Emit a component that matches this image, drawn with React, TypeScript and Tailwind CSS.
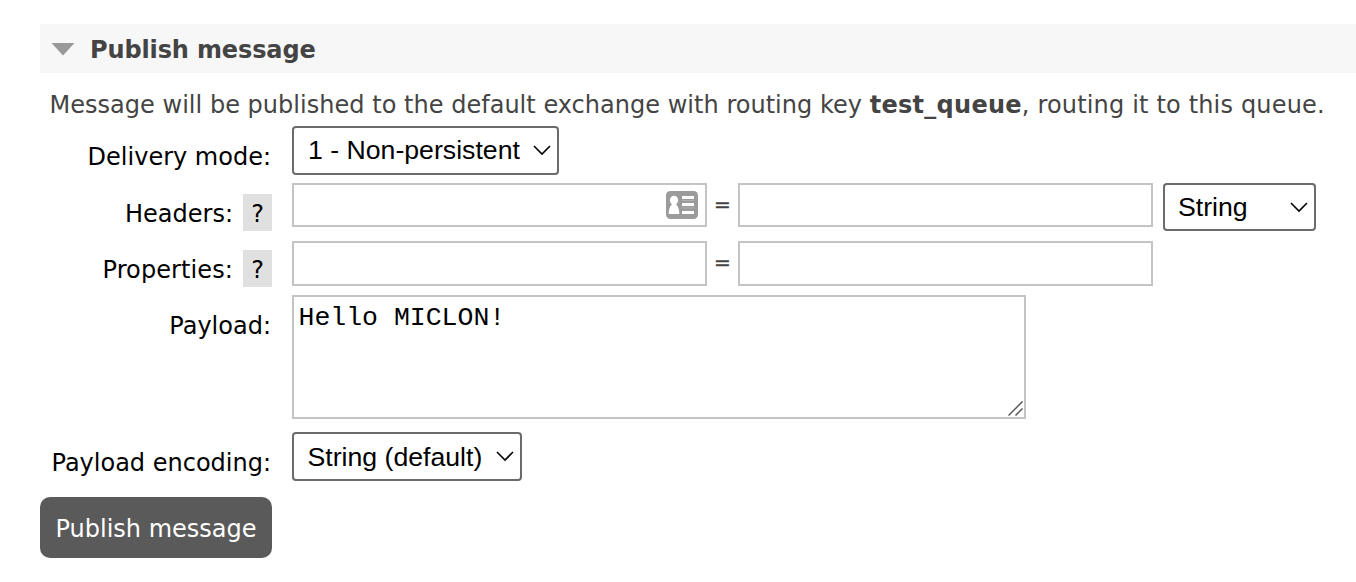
import React from "react";

const labelText =
  "font-['DejaVu_Sans',sans-serif] text-[24px] leading-[28px] text-black whitespace-nowrap";

function Select({ options, className, textClass }: { options: string[]; className: string; textClass: string }) {
  return (
    <div className={`relative shrink-0 ${className}`}>
      <select
        className={`block h-full w-full appearance-none rounded-[4px] border-2 border-[#6b6b6b] bg-white font-['Liberation_Sans',Arial,sans-serif] text-[26.67px] leading-[30px] text-black outline-none ${textClass}`}
      >
        {options.map((o) => (
          <option key={o}>{o}</option>
        ))}
      </select>
      <svg className="pointer-events-none absolute right-[8px] top-[18px] h-[12px] w-[18px]" viewBox="0 0 18 12" fill="none">
        <path d="M1 2 9 10 17 2" stroke="#000" strokeWidth="1.600" />
      </svg>
    </div>
  );
}

function TextInput({ className, label, children }: { className: string; label: string; children?: React.ReactNode }) {
  return (
    <div className={`relative w-[415px] shrink-0 ${className}`}>
      <input aria-label={label} className="block h-full w-full border-2 border-[#c4c4c4] bg-white px-2 text-[24px] outline-none" />
      {children}
    </div>
  );
}

function Label({ children, help, className }: { children: React.ReactNode; help?: boolean; className: string }) {
  return (
    <div className={`flex w-[232px] shrink-0 items-center justify-end ${labelText} ${className}`}>
      <span className={help ? "pt-[2px]" : "pr-[1px]"}>{children}</span>
      {help && (
        <span className="ml-[10px] flex h-[37px] w-[29px] items-center justify-center bg-[#e0e0e0] pt-[2px]">?</span>
      )}
    </div>
  );
}

function Equals() {
  return (
    <span className="w-[31px] shrink-0 text-center font-['DejaVu_Sans',sans-serif] text-[20px] leading-[42px] text-[#444] [-webkit-text-stroke:0.5px_#444]">=</span>
  );
}

function ContactIcon() {
  return (
    <svg className="absolute left-[374px] top-[8px] h-[28px] w-[32px]" viewBox="0 0 32 28">
      <rect width="32" height="28" rx="4.5" fill="#9b9b9b" />
      <ellipse cx="8" cy="9.300" rx="4.100" ry="4.600" fill="#fff" />
      <path d="M2.700 23c0-5 1.300-8 3.500-10h3.600c2.200 2 3.500 5 3.500 10z" fill="#fff" />
      <path d="M16 6.500h12M16 13.500h12M16 21.500h12" stroke="#fff" strokeWidth="3" />
      <path d="M16 9.500h12M16 17h12" stroke="#b0b0b0" strokeWidth="1" />
    </svg>
  );
}

export default function App() {
  return (
    <main className="h-[582px] w-[1356px] overflow-hidden bg-white pl-[40px] pt-[24px]">
      <h2 className="flex h-[49px] items-center bg-[#f7f7f7] pl-[11px]">
        <svg className="mt-[2px] h-[13px] w-[24px]" viewBox="0 0 24 13">
          <path d="M0.500 0h23L12 12.500z" fill="#999" />
        </svg>
        <span className="ml-[15px] pt-[2px] font-['DejaVu_Sans',sans-serif] text-[24px] font-bold leading-[28px] tracking-[-0.13px] text-[#444] whitespace-nowrap">
          Publish message
        </span>
      </h2>
      <p className="mt-[18px] pl-[9.500px] font-['DejaVu_Sans',sans-serif] text-[24px] leading-[28px] text-[#444] whitespace-nowrap">
        <span className="tracking-[0.025px]">Message will be published to the default exchange with routing key </span>
        <b className="tracking-[0.27px]">test_queue</b>
        <span className="tracking-[0.17px]">, routing it to this queue.</span>
      </p>
      <form onSubmit={(e) => e.preventDefault()}>
        <div className="mt-[7px] flex h-[49px]">
          <Label className="mr-[20px] mt-[17px] h-[28px]">Delivery mode:</Label>
          <Select className="h-[49px] w-[267px]" textClass="pl-[14px] pb-[2px]" options={["1 - Non-persistent", "2 - Persistent"]} />
        </div>
        <div className="mt-[8px] flex h-[48px]">
          <Label help className="mr-[20px] mt-[11px] h-[37px]">Headers:</Label>
          <TextInput label="Header name" className="h-[44px]"><ContactIcon /></TextInput>
          <Equals />
          <TextInput label="Header value" className="h-[44px]" />
          <Select className="ml-[10px] h-[48px] w-[153px]" textClass="pl-[13px]" options={["String", "Number", "Boolean"]} />
        </div>
        <div className="mt-[10px] flex h-[45px]">
          <Label help className="mr-[20px] mt-[9px] h-[37px]"><span className="tracking-[0.1px]">Properties:</span></Label>
          <TextInput label="Property name" className="h-[45px]" />
          <Equals />
          <TextInput label="Property value" className="h-[45px]" />
        </div>
        <div className="mt-[9px] flex h-[124px]">
          <Label className="mr-[20px] mt-[17px] h-[28px]">Payload:</Label>
          <div className="relative h-[124px] w-[734px]">
            <textarea
              aria-label="Payload"
              defaultValue="Hello MICLON!"
              className="block h-full w-full resize-none border-2 border-[#c4c4c4] bg-white px-[4.500px] py-[6px] font-['Liberation_Mono','Courier_New',monospace] text-[26.5px] leading-[30px] text-black outline-none"
            />
            <svg className="pointer-events-none absolute bottom-[3px] right-[3px] h-[15px] w-[15px]" viewBox="0 0 15 15">
              <path d="M0.500 14.500 14.500 0.500M7.500 14.500 14.500 7.500" stroke="#555" strokeWidth="1.500" />
            </svg>
          </div>
        </div>
        <div className="mt-[13px] flex h-[49px]">
          <Label className="mr-[20px] mt-[17px] h-[28px]">Payload encoding:</Label>
          <Select className="h-[49px] w-[230px]" textClass="pl-[13.500px]" options={["String (default)", "Base64"]} />
        </div>
        <button className="mt-[16px] flex h-[61px] w-[232px] items-center justify-center rounded-[10px] bg-[#5a5a5a] pt-[2px] font-['DejaVu_Sans',sans-serif] text-[24px] leading-[28px] text-white whitespace-nowrap">
          Publish message
        </button>
      </form>
    </main>
  );
}
